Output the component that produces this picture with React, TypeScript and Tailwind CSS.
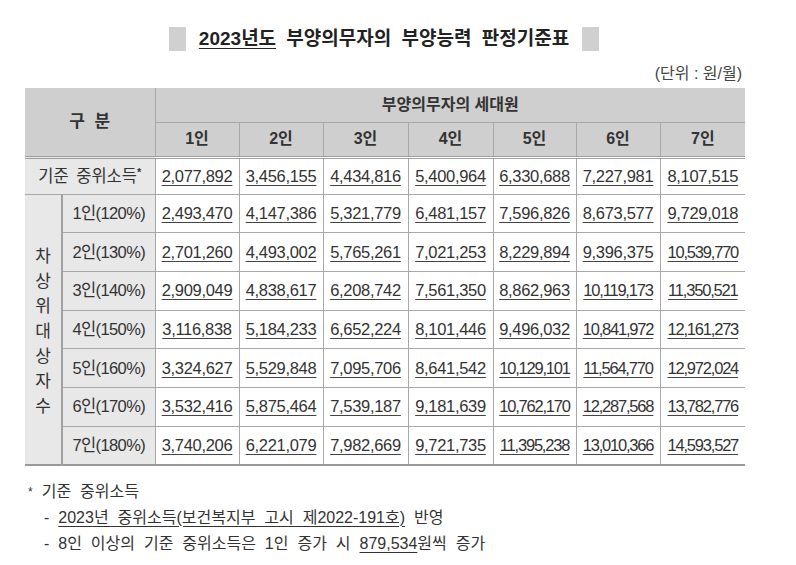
import React from "react";

const cols = ["1인", "2인", "3인", "4인", "5인", "6인", "7인"];
const base = ["2,077,892", "3,456,155", "4,434,816", "5,400,964", "6,330,688", "7,227,981", "8,107,515"];
const rows: [string, string[]][] = [
  ["1인(120%)", ["2,493,470", "4,147,386", "5,321,779", "6,481,157", "7,596,826", "8,673,577", "9,729,018"]],
  ["2인(130%)", ["2,701,260", "4,493,002", "5,765,261", "7,021,253", "8,229,894", "9,396,375", "10,539,770"]],
  ["3인(140%)", ["2,909,049", "4,838,617", "6,208,742", "7,561,350", "8,862,963", "10,119,173", "11,350,521"]],
  ["4인(150%)", ["3,116,838", "5,184,233", "6,652,224", "8,101,446", "9,496,032", "10,841,972", "12,161,273"]],
  ["5인(160%)", ["3,324,627", "5,529,848", "7,095,706", "8,641,542", "10,129,101", "11,564,770", "12,972,024"]],
  ["6인(170%)", ["3,532,416", "5,875,464", "7,539,187", "9,181,639", "10,762,170", "12,287,568", "13,782,776"]],
  ["7인(180%)", ["3,740,206", "6,221,079", "7,982,669", "9,721,735", "11,395,238", "13,010,366", "14,593,527"]],
];
const widths = [84, 84, 85, 85, 83, 84, 85];

function Num({ v }: { v: string }) {
  const long = v.length > 9;
  return (
    <span
      className={
        "underline decoration-[#444] underline-offset-[3px] decoration-1 " +
        (long ? "tracking-[-1.2px]" : "tracking-[-0.3px]")
      }
    >
      {v}
    </span>
  );
}

export default function App() {
  const font = { fontFamily: '"Liberation Sans", "Noto Sans CJK KR", sans-serif' };
  return (
    <div className="w-[796px] h-[565px] bg-white text-[#333] relative" style={font}>
      <div className="flex items-center justify-center pt-[27px] h-[51px] gap-[13px] pr-[28px]">
        <div className="w-[17px] h-[24px] bg-[#d0d0d0]" />
        <div className="text-[19px] font-bold text-[#222] leading-[24px] [word-spacing:5px]">
          <span className="underline underline-offset-[3px] decoration-1">2023년도</span> 부양의무자의 부양능력 판정기준표
        </div>
        <div className="w-[17px] h-[24px] bg-[#d0d0d0]" />
      </div>
      <div className="flex justify-end pr-[54px] mt-[13px] h-[24px] text-[16px] text-[#444] leading-[20px]">
        (단위 : 원/월)
      </div>
      <div className="pl-[25px]">
        <table className="border-collapse table-fixed w-[719px] text-[16.5px]">
          <colgroup>
            <col style={{ width: 37 }} />
            <col style={{ width: 93 }} />
            {widths.map((w, i) => (
              <col key={i} style={{ width: w }} />
            ))}
          </colgroup>
          <thead>
            <tr className="h-[34px] bg-[#cfcfcf]">
              <th
                colSpan={2}
                rowSpan={2}
                className="border-r border-[#a8a8a8] font-bold text-[17px] text-[#333] [word-spacing:5px]"
              >
                구 분
              </th>
              <th colSpan={7} className="border-b border-[#a8a8a8] font-bold text-[16px] text-[#333]">
                부양의무자의 세대원
              </th>
            </tr>
            <tr className="h-[35px] bg-[#cfcfcf] border-b-[3px] border-double border-[#a0a0a0]">
              {cols.map((c, i) => (
                <th
                  key={c}
                  className={"font-bold text-[16px] text-[#333] " + (i < 6 ? "border-r border-[#a8a8a8]" : "")}
                >
                  {c}
                </th>
              ))}
            </tr>
          </thead>
          <tbody>
            <tr className="h-[37px] border-b border-[#a8a8a8]">
              <td colSpan={2} className="bg-[#e8e8e8] text-center border-r border-[#a8a8a8] [word-spacing:3px]">
                기준 중위소득<span className="align-top text-[11px] font-bold">*</span>
              </td>
              {base.map((v, i) => (
                <td key={i} className={"text-center " + (i < 6 ? "border-r border-[#a8a8a8]" : "")}>
                  <Num v={v} />
                </td>
              ))}
            </tr>
            {rows.map(([label, vals], r) => (
              <tr
                key={label}
                className={"h-[38.7px] " + (r === 6 ? "border-b-2 border-[#999]" : "border-b border-[#a8a8a8]")}
              >
                {r === 0 && (
                  <td rowSpan={7} className="bg-[#e8e8e8] border-r-2 border-[#a0a0a0] text-center align-middle">
                    <div className="flex flex-col items-center text-[17px] leading-[25px] text-[#333] pt-[4px]">
                      {"차상위대상자수".split("").map((ch, k) => (
                        <span key={k}>{ch}</span>
                      ))}
                    </div>
                  </td>
                )}
                <td className="bg-[#e8e8e8] text-center border-r border-[#a8a8a8] tracking-[-0.6px]">{label}</td>
                {vals.map((v, i) => (
                  <td key={i} className={"text-center " + (i < 6 ? "border-r border-[#a8a8a8]" : "")}>
                    <Num v={v} />
                  </td>
                ))}
              </tr>
            ))}
          </tbody>
        </table>
      </div>
      <div className="mt-[13px] text-[16px] text-[#333] leading-[26px] [word-spacing:4.5px]">
        <div className="pl-[28px]">
          <span className="text-[12px] align-top mr-[9px]">*</span>기준 중위소득
        </div>
        <div className="pl-[44px]">
          - <span className="underline underline-offset-[3px] decoration-1">2023년 중위소득(보건복지부 고시 제2022-191호)</span> 반영
        </div>
        <div className="pl-[44px]">
          - 8인 이상의 기준 중위소득은 1인 증가 시{" "}
          <span className="underline underline-offset-[3px] decoration-1">879,534</span>원씩 증가
        </div>
      </div>
    </div>
  );
}
